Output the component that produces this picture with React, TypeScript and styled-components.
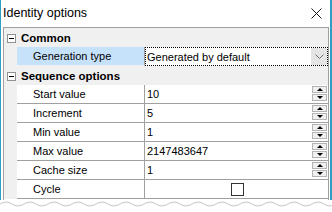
import React from "react";
import styled, { createGlobalStyle } from "styled-components";

const GlobalStyle = createGlobalStyle`
  html, body {
    margin: 0;
    padding: 0;
    background: #ffffff;
    width: 332px;
    height: 212px;
    overflow: hidden;
  }
  body {
    font-family: "Liberation Sans", Arial, sans-serif;
    color: #000000;
  }
`;

type Prop = {
  label: string;
  value: string;
  kind: "spin" | "check" | "drop";
};

const commonProps: Prop[] = [
  { label: "Generation type", value: "Generated by default", kind: "drop" },
];

const sequenceProps: Prop[] = [
  { label: "Start value", value: "10", kind: "spin" },
  { label: "Increment", value: "5", kind: "spin" },
  { label: "Min value", value: "1", kind: "spin" },
  { label: "Max value", value: "2147483647", kind: "spin" },
  { label: "Cache size", value: "1", kind: "spin" },
  { label: "Cycle", value: "", kind: "check" },
];

// torn bottom edge of the screenshot
const wavePath = (() => {
  let d = "M0 4";
  for (let x = 0; x < 332; x += 24) {
    d += ` Q${x + 6} 0 ${x + 12} 4 Q${x + 18} 8 ${x + 24} 4`;
  }
  return d;
})();

const Page = styled.div`
  width: 332px;
  height: 212px;
  display: flex;
  flex-direction: column;
  background: #ffffff;
`;

const Window = styled.div`
  width: 332px;
  height: 200px;
  box-sizing: border-box;
  border-left: 1px solid #2d9fc3;
  border-right: 2px solid #2d9fc3;
  padding: 0 1px 0 2px;
  display: flex;
  flex-direction: column;
  background: #ffffff;
`;

const TitleBar = styled.div`
  height: 27px;
  display: flex;
  align-items: center;
  justify-content: space-between;
  padding: 0 7px 1px 0;
  box-sizing: border-box;
`;

const Title = styled.span`
  font-size: 12.5px;
  color: #000000;
`;

const CloseIcon = styled.svg`
  width: 11px;
  height: 11px;
  display: block;
`;

const Grid = styled.div`
  border: 1px solid #a0a0a0;
  border-bottom: none;
  display: flex;
  flex-direction: column;
  flex: 1;
  background: #ffffff;
`;

const CategoryRow = styled.div`
  height: 19px;
  display: flex;
  align-items: center;
  background: #f0f0f0;
  box-sizing: border-box;
`;

const ToggleBox = styled.div`
  width: 9px;
  height: 9px;
  box-sizing: border-box;
  border: 1px solid #919191;
  background: #ffffff;
  margin: 1px 5px 0 3px;
  display: flex;
  align-items: center;
  justify-content: center;
  &::after {
    content: "";
    width: 5px;
    height: 1px;
    background: #000000;
  }
`;

const CategoryLabel = styled.span`
  font-size: 11.5px;
  font-weight: bold;
`;

const PropRow = styled.div`
  height: 19px;
  display: flex;
`;

const Gutter = styled.div`
  width: 13px;
  flex: none;
  background: #f0f0f0;
`;

const LabelCell = styled.div<{ $selected?: boolean }>`
  width: 128px;
  flex: none;
  box-sizing: border-box;
  padding-left: 16px;
  display: flex;
  align-items: center;
  font-size: 11px;
  background: ${(p) => (p.$selected ? "#c6e1fa" : "#ffffff")};
  border-bottom: 1px solid ${(p) => (p.$selected ? "#f0f0f0" : "#a0a0a0")};
  border-right: 1px solid #a0a0a0;
`;

const ValueCell = styled.div<{ $focused?: boolean }>`
  flex: 1;
  min-width: 0;
  box-sizing: border-box;
  display: flex;
  align-items: center;
  font-size: 11px;
  padding-left: 2px;
  border-bottom: 1px solid #a0a0a0;
  ${(p) =>
    p.$focused &&
    `
    border: 1px dotted #000000;
    padding-left: 1px;
  `}
`;

const ValueText = styled.span`
  flex: 1;
  white-space: nowrap;
`;

const DropButton = styled.div`
  width: 16px;
  height: 17px;
  background: #e5e5e5;
  display: flex;
  align-items: center;
  justify-content: center;
`;

const Spinner = styled.div`
  display: flex;
  flex-direction: column;
  gap: 1px;
  margin-right: 1px;
  align-self: flex-start;
  margin-top: 1px;
`;

const SpinButton = styled.div`
  width: 15px;
  height: 7px;
  box-sizing: border-box;
  border: 1px solid #b4b4b4;
  background: #f0f0f0;
  display: flex;
  align-items: center;
  justify-content: center;
`;

const Arrow = styled.div<{ $up?: boolean }>`
  width: 0;
  height: 0;
  border-left: 3px solid transparent;
  border-right: 3px solid transparent;
  ${(p) => (p.$up ? "border-bottom: 3px solid #000;" : "border-top: 3px solid #000;")}
`;

const CheckWrap = styled.div`
  flex: 1;
  display: flex;
  justify-content: center;
  align-items: center;
`;

const CheckBox = styled.div`
  width: 13px;
  height: 13px;
  box-sizing: border-box;
  border: 1px solid #333333;
  background: #ffffff;
`;

const TornEdge = styled.svg`
  display: block;
  width: 332px;
  height: 12px;
`;

const PropLine = ({ prop, selected }: { prop: Prop; selected?: boolean }) => (
  <PropRow>
    <Gutter />
    <LabelCell $selected={selected}>{prop.label}</LabelCell>
    <ValueCell $focused={selected}>
      {prop.kind === "check" ? (
        <CheckWrap>
          <CheckBox />
        </CheckWrap>
      ) : (
        <ValueText>{prop.value}</ValueText>
      )}
      {prop.kind === "drop" && (
        <DropButton>
          <svg width="9" height="5" viewBox="0 0 9 5">
            <path d="M0.5 0.5 L4.5 4.5 L8.5 0.5" fill="none" stroke="#707070" strokeWidth="1" />
          </svg>
        </DropButton>
      )}
      {prop.kind === "spin" && (
        <Spinner>
          <SpinButton>
            <Arrow $up />
          </SpinButton>
          <SpinButton>
            <Arrow />
          </SpinButton>
        </Spinner>
      )}
    </ValueCell>
  </PropRow>
);

export default function App() {
  return (
    <Page>
      <GlobalStyle />
      <Window>
        <TitleBar>
          <Title>Identity options</Title>
          <CloseIcon viewBox="0 0 11 11">
            <path d="M0.5 0.5 L10.5 10.5 M10.5 0.5 L0.5 10.5" stroke="#1a1a1a" strokeWidth="1" />
          </CloseIcon>
        </TitleBar>
        <Grid>
          <CategoryRow>
            <ToggleBox />
            <CategoryLabel>Common</CategoryLabel>
          </CategoryRow>
          {commonProps.map((p) => (
            <PropLine key={p.label} prop={p} selected />
          ))}
          <CategoryRow>
            <ToggleBox />
            <CategoryLabel>Sequence options</CategoryLabel>
          </CategoryRow>
          {sequenceProps.map((p) => (
            <PropLine key={p.label} prop={p} />
          ))}
        </Grid>
      </Window>
      <TornEdge viewBox="0 0 332 12">
        <path d={wavePath} fill="none" stroke="#c4c4c4" strokeWidth="1" />
      </TornEdge>
    </Page>
  );
}
